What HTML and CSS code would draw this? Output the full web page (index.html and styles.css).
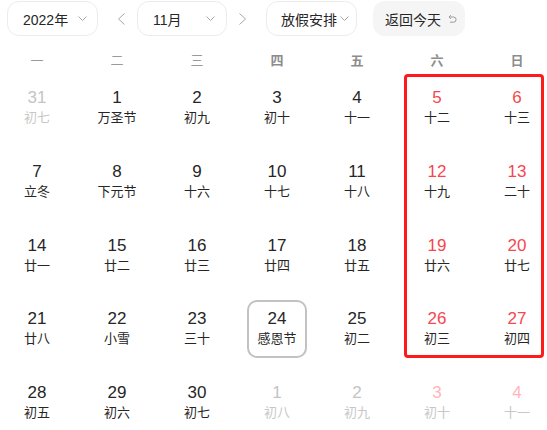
FILE: index.html
```html
<!DOCTYPE html>
<html lang="zh">
<head>
<meta charset="utf-8">
<title>日历</title>
<link rel="stylesheet" href="styles.css">
</head>
<body>
<div class="calendar">
  <div class="toolbar">
    <div class="select select-year">
      <span class="select-text">2022年</span>
      <svg class="chev" width="9" height="6" viewBox="0 0 9 6"><polyline points="0.5,0.5 4.5,4.5 8.5,0.5"/></svg>
    </div>
    <svg class="nav nav-prev" width="9" height="12" viewBox="0 0 9 12"><polyline points="7.5,0.5 1.5,6 7.5,11.5"/></svg>
    <div class="select select-month">
      <span class="select-text">11月</span>
      <svg class="chev" width="9" height="6" viewBox="0 0 9 6"><polyline points="0.5,0.5 4.5,4.5 8.5,0.5"/></svg>
    </div>
    <svg class="nav nav-next" width="9" height="12" viewBox="0 0 9 12"><polyline points="1.5,0.5 7.5,6 1.5,11.5"/></svg>
    <div class="select select-holiday">
      <span class="select-text">放假安排</span>
      <svg class="chev" width="9" height="6" viewBox="0 0 9 6"><polyline points="0.5,0.5 4.5,4.5 8.5,0.5"/></svg>
    </div>
    <div class="today-btn">
      <span>返回今天</span>
      <svg class="today-icon" width="10" height="10" viewBox="0 0 10 10"><path d="M2 3 H6.5 A2.6 2.6 0 0 1 6.5 8.2 H3"/><polyline points="3.8,1.2 2,3 3.8,4.8"/></svg>
    </div>
  </div>

  <div class="weekdays">
    <div>一</div><div>二</div><div>三</div><div class="bold">四</div><div class="bold">五</div><div class="bold">六</div><div class="bold">日</div>
  </div>

  <div class="days">
    <div class="day other"><div class="box"><span class="num">31</span><span class="lunar">初七</span></div></div>
    <div class="day"><div class="box"><span class="num">1</span><span class="lunar">万圣节</span></div></div>
    <div class="day"><div class="box"><span class="num">2</span><span class="lunar">初九</span></div></div>
    <div class="day"><div class="box"><span class="num">3</span><span class="lunar">初十</span></div></div>
    <div class="day"><div class="box"><span class="num">4</span><span class="lunar">十一</span></div></div>
    <div class="day weekend"><div class="box"><span class="num">5</span><span class="lunar">十二</span></div></div>
    <div class="day weekend"><div class="box"><span class="num">6</span><span class="lunar">十三</span></div></div>

    <div class="day"><div class="box"><span class="num">7</span><span class="lunar">立冬</span></div></div>
    <div class="day"><div class="box"><span class="num">8</span><span class="lunar">下元节</span></div></div>
    <div class="day"><div class="box"><span class="num">9</span><span class="lunar">十六</span></div></div>
    <div class="day"><div class="box"><span class="num">10</span><span class="lunar">十七</span></div></div>
    <div class="day"><div class="box"><span class="num">11</span><span class="lunar">十八</span></div></div>
    <div class="day weekend"><div class="box"><span class="num">12</span><span class="lunar">十九</span></div></div>
    <div class="day weekend"><div class="box"><span class="num">13</span><span class="lunar">二十</span></div></div>

    <div class="day"><div class="box"><span class="num">14</span><span class="lunar">廿一</span></div></div>
    <div class="day"><div class="box"><span class="num">15</span><span class="lunar">廿二</span></div></div>
    <div class="day"><div class="box"><span class="num">16</span><span class="lunar">廿三</span></div></div>
    <div class="day"><div class="box"><span class="num">17</span><span class="lunar">廿四</span></div></div>
    <div class="day"><div class="box"><span class="num">18</span><span class="lunar">廿五</span></div></div>
    <div class="day weekend"><div class="box"><span class="num">19</span><span class="lunar">廿六</span></div></div>
    <div class="day weekend"><div class="box"><span class="num">20</span><span class="lunar">廿七</span></div></div>

    <div class="day"><div class="box"><span class="num">21</span><span class="lunar">廿八</span></div></div>
    <div class="day"><div class="box"><span class="num">22</span><span class="lunar">小雪</span></div></div>
    <div class="day"><div class="box"><span class="num">23</span><span class="lunar">三十</span></div></div>
    <div class="day selected"><div class="box"><span class="num">24</span><span class="lunar">感恩节</span></div></div>
    <div class="day"><div class="box"><span class="num">25</span><span class="lunar">初二</span></div></div>
    <div class="day weekend"><div class="box"><span class="num">26</span><span class="lunar">初三</span></div></div>
    <div class="day weekend"><div class="box"><span class="num">27</span><span class="lunar">初四</span></div></div>

    <div class="day"><div class="box"><span class="num">28</span><span class="lunar">初五</span></div></div>
    <div class="day"><div class="box"><span class="num">29</span><span class="lunar">初六</span></div></div>
    <div class="day"><div class="box"><span class="num">30</span><span class="lunar">初七</span></div></div>
    <div class="day other"><div class="box"><span class="num">1</span><span class="lunar">初八</span></div></div>
    <div class="day other"><div class="box"><span class="num">2</span><span class="lunar">初九</span></div></div>
    <div class="day other weekend"><div class="box"><span class="num">3</span><span class="lunar">初十</span></div></div>
    <div class="day other weekend"><div class="box"><span class="num">4</span><span class="lunar">十一</span></div></div>
  </div>

  <div class="highlight"></div>
</div>
</body>
</html>
```

FILE: styles.css
```css
html, body {
  margin: 0;
  padding: 0;
  overflow: hidden;
  background: #ffffff;
}

body {
  font-family: "Liberation Sans", "Noto Sans CJK SC", sans-serif;
  color: #262626;
}

.calendar {
  position: relative;
  width: 547px;
  height: 430px;
}

/* toolbar */
.toolbar {
  display: flex;
  align-items: center;
  height: 35px;
  padding: 1px 0 0 7px;
}

.select {
  box-sizing: border-box;
  height: 35px;
  border: 1px solid #ececec;
  border-radius: 12px;
  display: flex;
  align-items: center;
  font-size: 14px;
  color: #262626;
}

.select-year {
  width: 91px;
  padding-left: 15px;
}

.select-year .chev {
  margin-left: 10px;
}

.select-month {
  width: 90px;
  padding-left: 15px;
}

.select-month .chev {
  margin-left: 24px;
}

.select-holiday {
  width: 91px;
  padding-left: 14px;
}

.select-holiday .chev {
  margin-left: 3px;
}

.chev polyline,
.nav polyline {
  fill: none;
  stroke: #a6a6a6;
  stroke-width: 1;
}

.nav {
  display: block;
}

.nav-prev {
  margin: 0 11px 0 19px;
}

.nav-next {
  margin: 0 19px 0 11px;
}

.today-btn {
  box-sizing: border-box;
  height: 35px;
  width: 92px;
  margin-left: 16px;
  padding-left: 12px;
  border-radius: 12px;
  background: #f5f5f5;
  display: flex;
  align-items: center;
  font-size: 14px;
  color: #262626;
}

.today-icon {
  margin-left: 6px;
}

.today-icon path,
.today-icon polyline {
  fill: none;
  stroke: #9a9a9a;
  stroke-width: 1;
}

/* weekdays */
.weekdays {
  display: grid;
  grid-template-columns: repeat(7, 80px);
  margin-left: -3px;
  margin-top: 3px;
  height: 40px;
  align-items: center;
  font-size: 13px;
  color: #9a9a9a;
}

.weekdays div {
  text-align: center;
}

.weekdays .bold {
  font-weight: bold;
  color: #8c8c8c;
}

/* days */
.days {
  display: grid;
  grid-template-columns: repeat(7, 80px);
  grid-auto-rows: 58px;
  row-gap: 15.75px;
  margin-left: -3px;
}

.day {
  display: flex;
  justify-content: center;
}

.box {
  box-sizing: border-box;
  width: 60px;
  height: 58px;
  border: 2px solid transparent;
  border-radius: 10px;
  padding-top: 7px;
  display: flex;
  flex-direction: column;
  align-items: center;
}

.num {
  font-size: 17px;
  line-height: 20px;
  color: #262626;
}

.lunar {
  margin-top: 1px;
  font-size: 13px;
  line-height: 18px;
  color: #262626;
}

.weekend .num {
  color: #f5474f;
}

.other .num {
  color: #c4c4c4;
}

.other .lunar {
  color: #c8c8c8;
}

.other.weekend .num {
  color: #ffb6ba;
}

.selected .box {
  border-color: #c2c2c2;
}

/* annotation overlay */
.highlight {
  position: absolute;
  left: 404px;
  top: 74px;
  width: 140px;
  height: 284px;
  box-sizing: border-box;
  border: 3px solid #ff1a1a;
  border-radius: 4px;
  pointer-events: none;
}
```
